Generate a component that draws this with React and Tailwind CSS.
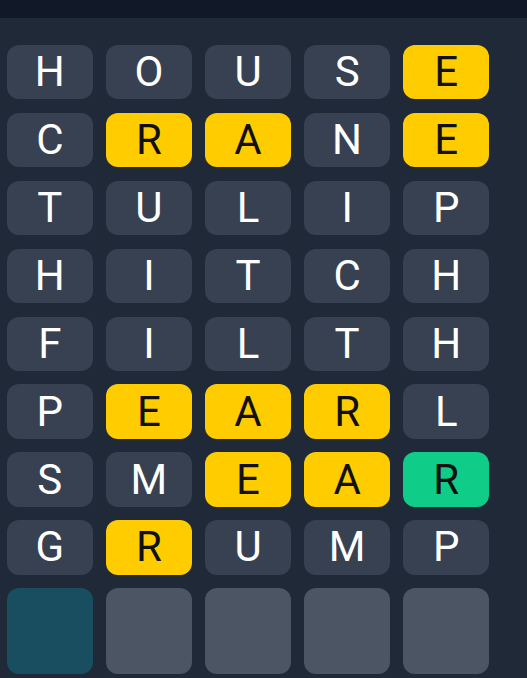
import React from 'react';

// guess rows: each letter is paired with its state
const ROWS = [
  ['H', 'O', 'U', 'S', 'E'],
  ['C', 'R', 'A', 'N', 'E'],
  ['T', 'U', 'L', 'I', 'P'],
  ['H', 'I', 'T', 'C', 'H'],
  ['F', 'I', 'L', 'T', 'H'],
  ['P', 'E', 'A', 'R', 'L'],
  ['S', 'M', 'E', 'A', 'R'],
  ['G', 'R', 'U', 'M', 'P'],
];

const STATES = [
  'xxxxp',
  'xppxp',
  'xxxxx',
  'xxxxx',
  'xxxxx',
  'xpppx',
  'xxppc',
  'xpxxx',
];

const tileClass = {
  x: 'bg-[#374151] text-white',
  p: 'bg-[#ffcc00] text-[#111111]',
  c: 'bg-[#0fcc88] text-[#111111]',
};

const Tile = ({ letter, state }) => (
  <div
    className={`h-[54.4px] rounded-[12px] flex items-center justify-center text-[42px] leading-none ${tileClass[state]}`}
  >
    {letter}
  </div>
);

export default function App() {
  return (
    <div
      className="w-[527px] h-[678px] overflow-hidden bg-[#1f2937]"
      style={{ fontFamily: 'Roboto, "Noto Sans", sans-serif' }}
    >
      {/* Top bar */}
      <div className="h-[18px] bg-[#111827]" />

      {/* Board */}
      <div className="pl-[7px] pt-[27px] w-[489px]">
        <div className="grid grid-cols-5 gap-x-[13.5px] gap-y-[13.5px]">
          {ROWS.map((row, r) =>
            row.map((letter, c) => (
              <Tile key={`${r}-${c}`} letter={letter} state={STATES[r][c]} />
            ))
          )}
          {/* current input row */}
          <div className="h-[86px] rounded-[12px] bg-[#194d60]" />
          <div className="h-[86px] rounded-[12px] bg-[#4b5563]" />
          <div className="h-[86px] rounded-[12px] bg-[#4b5563]" />
          <div className="h-[86px] rounded-[12px] bg-[#4b5563]" />
          <div className="h-[86px] rounded-[12px] bg-[#4b5563]" />
        </div>
      </div>
    </div>
  );
}
